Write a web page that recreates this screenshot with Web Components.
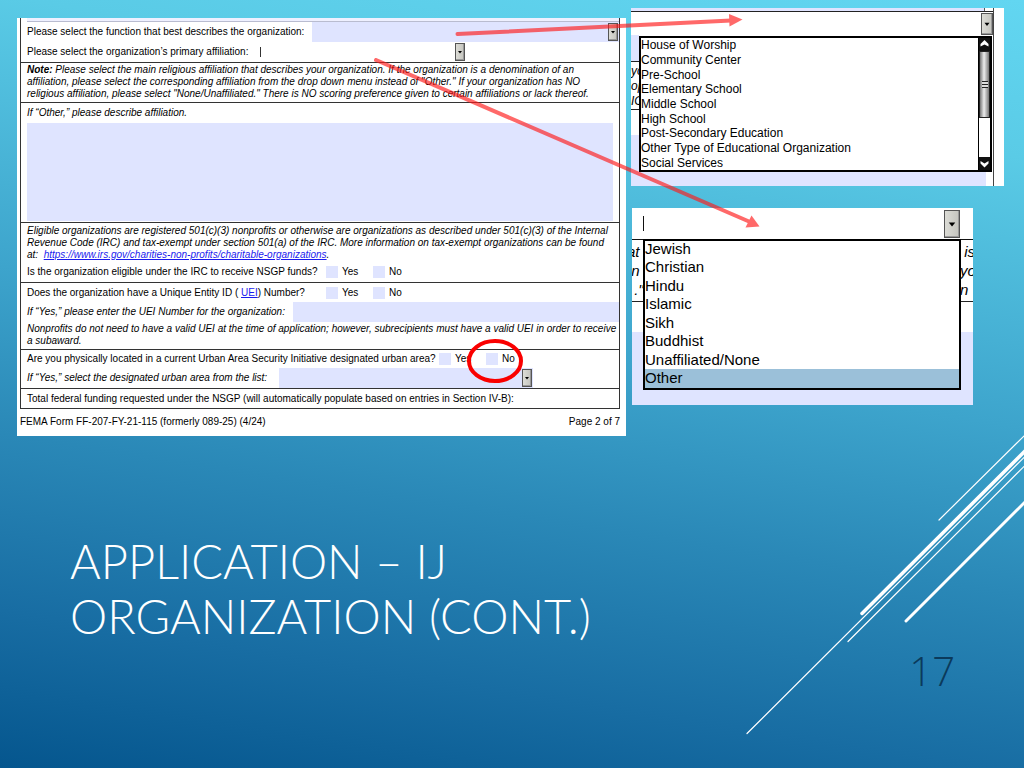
<!DOCTYPE html>
<html lang="en">
<head>
<meta charset="utf-8">
<title>Application – IJ Organization (cont.)</title>
<style>
  body { margin: 0; font-family: "Liberation Sans", Arial, sans-serif; color: #000; }
</style>
</head>
<body>
<training-slide>
  <nsgp-form slot="form"></nsgp-form>
  <function-popup slot="popups"></function-popup>
  <affiliation-popup slot="popups"></affiliation-popup>
  <span slot="title">APPLICATION – IJ<br>ORGANIZATION (CONT.)</span>
  <span slot="number">17</span>
</training-slide>

<template id="t-slide">
  <style>
    :host { display: block; }
    main {
      position: relative; box-sizing: border-box; min-height: 100vh; overflow: hidden;
      display: flex; flex-direction: column;
      background: linear-gradient(189deg, #62d6f1 0%, #5acbe6 17%, #3da4cc 46%, #2a88b7 64%, #186da3 83%, #05568e 100%);
    }
    .captures { display: grid; grid-template-columns: 609fr 373fr; column-gap: 5px; padding: 8px 20px 0 17px; align-items: start; }
    .left { padding-top: 10px; }
    .right { display: flex; flex-direction: column; gap: 22px; }
    h1 {
      margin: 98px 70px 0; color: #fff; text-transform: uppercase;
      font: 300 47px/55px Lato, "Open Sans", sans-serif;
    }
    .number { margin: 0 69px 0 0; text-align: right; color: #0b3a5b; font: 300 40px/54px "Open Sans", "Noto Sans", sans-serif; }
    svg { position: absolute; inset: 0; width: 100%; height: 100%; pointer-events: none; }
  </style>
  <main>
    <div class="captures">
      <div class="left"><slot name="form"></slot></div>
      <div class="right"><slot name="popups"></slot></div>
    </div>
    <h1><slot name="title"></slot></h1>
    <div class="number"><slot name="number"></slot></div>
    <svg viewBox="0 0 1024 768" preserveAspectRatio="none" aria-hidden="true">
      <g stroke="#fff" stroke-linecap="round" fill="none">
        <path d="M939 520L1026 434M747 733.500L1026 455.500M848 641.500L1026 464.500" stroke-width="1.200"/>
        <path d="M862 613.500L1026 450" stroke-width="3.500"/>
        <path d="M906 621L1026 501" stroke-width="3"/>
      </g>
      <g opacity=".65" fill="#ff1a1a">
        <path d="M457.500 34L731 20.600" stroke="#ff1a1a" stroke-width="4" stroke-linecap="round"/>
        <path d="M729 14L742.500 19.500L729.500 26.500Z"/>
      </g>
      <g opacity=".65" fill="#ff1a1a">
        <path d="M376 60L749 221.500" stroke="#ff1a1a" stroke-width="4" stroke-linecap="round"/>
        <path d="M751.500 215.500L759.500 226.500L745.500 227.500Z"/>
      </g>
      <ellipse cx="495" cy="361" rx="26" ry="20" fill="none" stroke="#fa0000" stroke-width="4"/>
    </svg>
  </main>
</template>

<template id="t-arrow">
  <style>
    :host { display: block; box-sizing: border-box; width: 10px; border: 1px solid #555; background: linear-gradient(90deg, #dcdcd6, #c4c4be); box-shadow: inset -1px -1px #999; }
    svg { display: block; width: 100%; height: 100%; }
  </style>
  <svg viewBox="0 0 8 16" aria-hidden="true"><path d="M2 7H6L4 9.500Z" fill="#000"/></svg>
</template>

<template id="t-drop">
  <style>
    :host { display: flex; height: 20px; padding-left: 6px; font-size: 10px; line-height: 19px; }
    label { flex: none; width: var(--label); white-space: nowrap; }
    :host([italic]) label { font-style: italic; }
    .box { flex: 1; display: flex; max-width: var(--field, none); background: #dfe4ff; position: relative; }
    :host([open]) .box { background: #fff; }
    select { flex: 1; min-width: 0; appearance: none; border: 0; margin: 0; padding: 0; background: none; font: inherit; outline: 0; }
    arrow-button { margin: 1px; }
    .caret { display: none; width: 1px; height: 10px; margin: 5px 0 0 1px; background: #333; }
    :host([open]) .caret { display: block; }
  </style>
  <label for="s"><slot></slot></label>
  <div class="box"><span class="caret"></span><select id="s"><option></option></select><arrow-button></arrow-button></div>
</template>

<template id="t-check">
  <style>
    :host { display: inline-flex; align-items: center; width: 47px; }
    input { appearance: none; margin: 0 4px 0 0; width: 12px; height: 12px; background: #dfe4ff; }
    input:checked { background: #5b6ee0; }
  </style>
  <input type="checkbox" id="c"><label for="c"><slot></slot></label>
</template>

<template id="t-form">
  <style>
    :host { display: block; background: #fff; padding: 0 6px 0 3px; font-size: 10px; line-height: 12px; }
    .frame { border: solid #333; border-width: 0 1px; }
    section { border-bottom: 1px solid #333; }
    .strip { margin-left: 6px; height: 3px; background: #eef0ff; border-bottom: 1px solid #b9bcd0; }
    p { margin: 0; padding: 1px 0 0 6px; font-style: italic; white-space: nowrap; }
    .note { padding-bottom: 2px; }
    .lead { padding-top: 2px; }
    a { color: #1a1aee; }
    .row { display: flex; align-items: center; height: 19px; padding-left: 6px; white-space: nowrap; }
    .tall { height: 21px; }
    .short { height: 18px; }
    .q { flex: none; width: 299px; }
    .wide { width: 412px; }
    .it { font-style: italic; }
    .field { height: 20px; }
    .field label { width: 266px; flex: none; }
    input, textarea { box-sizing: border-box; border: 0; margin: 0; padding: 2px; background: #dfe4ff; font: inherit; outline: 0; }
    .field input { flex: 1; min-width: 0; height: 20px; }
    textarea { display: block; resize: none; height: 98px; width: calc(100% - 12px); margin: 0 6px 1px; }
    footer { display: flex; justify-content: space-between; height: 27px; line-height: 26px; }
  </style>
  <div class="frame">
    <div class="strip"></div>
    <section>
      <drop-field style="--label:285px">Please select the function that best describes the organization:</drop-field>
      <drop-field open style="--label:232px;--field:207px">Please select the organization’s primary affiliation:</drop-field>
    </section>
    <section>
      <p class="note"><b>Note:</b> Please select the main religious affiliation that describes your organization. If the organization is a denomination of an<br>affiliation, please select the corresponding affiliation from the drop down menu instead of "Other." If your organization has NO<br>religious affiliation, please select "None/Unaffiliated." There is NO scoring preference given to certain affiliations or lack thereof.</p>
    </section>
    <section>
      <div class="row it field"><label for="aff">If “Other,” please describe affiliation.</label></div>
      <textarea id="aff"></textarea>
    </section>
    <section>
      <p class="lead">Eligible organizations are registered 501(c)(3) nonprofits or otherwise are organizations as described under 501(c)(3) of the Internal<br>Revenue Code (IRC) and tax-exempt under section 501(a) of the IRC. More information on tax-exempt organizations can be found<br>at:&nbsp; <a href="#irs">https://www.irs.gov/charities-non-profits/charitable-organizations</a>.</p>
      <div class="row tall"><span class="q">Is the organization eligible under the IRC to receive NSGP funds?</span><check-option>Yes</check-option><check-option>No</check-option></div>
    </section>
    <section>
      <div class="row"><span class="q">Does the organization have a Unique Entity ID ( <a href="#uei">UEI</a>) Number?</span><check-option>Yes</check-option><check-option>No</check-option></div>
      <div class="row it field"><label for="uei">If “Yes,” please enter the UEI Number for the organization:</label><input id="uei" type="text"></div>
      <p class="note">Nonprofits do not need to have a valid UEI at the time of application; however, subrecipients must have a valid UEI in order to receive<br>a subaward.</p>
    </section>
    <section>
      <div class="row short"><span class="q wide">Are you physically located in a current Urban Area Security Initiative designated urban area?</span><check-option>Yes</check-option><check-option>No</check-option></div>
      <drop-field italic style="--label:252px;--field:254px">If “Yes,” select the designated urban area from the list:</drop-field>
    </section>
    <section><div class="row">Total federal funding requested under the NSGP (will automatically populate based on entries in Section IV-B):</div></section>
  </div>
  <footer><span>FEMA Form FF-207-FY-21-115 (formerly 089-25) (4/24)</span><span>Page 2 of 7</span></footer>
</template>

<template id="t-function">
  <style>
    :host { display: block; position: relative; height: 178px; background: #fff; overflow: hidden; font-size: 12px; }
    .sheet { box-sizing: border-box; height: 100%; margin-right: 10px; border-right: 1px solid #444; }
    .top { height: 3px; margin-right: 8px; background: #dfe4ff; border-right: 1px solid #555; }
    .entry { display: flex; justify-content: flex-end; height: 24px; box-sizing: border-box; border-top: 1px solid #222; }
    arrow-button { width: 12px; height: 22px; margin-top: 1px; }
    .blue { height: 26px; width: 8px; background: #dfe4ff; }
    .lines { height: 49px; box-sizing: border-box; border: solid #222; border-width: 1px 0; padding-top: 2px; line-height: 15px; font-style: italic; width: 14px; overflow: hidden; }
    .area { margin: 25px 7px 0 0; height: 52px; background: #dfe4ff; }
    .menu { position: absolute; left: 8px; right: 12px; top: 28px; display: flex; border: 2px solid #000; background: #fff; }
    select { flex: 1; min-width: 0; height: 132px; appearance: none; border: 0; margin: 0; padding: 0; background: #fff; color: #000; font: inherit; overflow: hidden; outline: 0; border-radius: 0; }
    option { box-sizing: border-box; height: 15px; min-height: 0; padding: 0; line-height: 12px; color: #000; }
    option:nth-child(3n) { height: 14px; }
    .bar { width: 11px; display: flex; flex-direction: column; border-left: 1px solid #000; }
    .bar svg { display: block; flex: none; }
    .thumb { box-sizing: border-box; height: 67px; border: solid #222; border-width: 1px; background: linear-gradient(90deg, #777, #eee 45%, #ccc 60%, #777); display: flex; align-items: center; justify-content: center; }
    .thumb i { width: 6px; height: 5px; border: solid #222; border-width: 1px 0; background: linear-gradient(#ddd 40%, #222 40% 60%, #ddd 60%); }
    .gap { flex: 1; background: #fff; }
  </style>
  <div class="sheet">
    <div class="top"></div>
    <div class="entry"><arrow-button></arrow-button></div>
    <div class="blue"></div>
    <div class="lines">yo<br>op<br>IC</div>
    <div class="area"></div>
  </div>
  <div class="menu">
    <select size="9" aria-label="Organization function">
      <option>House of Worship</option><option>Community Center</option><option>Pre-School</option><option>Elementary School</option><option>Middle School</option><option>High School</option><option>Post-Secondary Education</option><option>Other Type of Educational Organization</option><option>Social Services</option>
    </select>
    <div class="bar" aria-hidden="true">
      <svg width="11" height="13"><path d="M0 0H11V13H0Z" fill="#111"/><path d="M1.500 8.500V6L5.500 2L9.500 6V8.500L5.500 6.500Z" fill="#fff"/></svg>
      <div class="thumb"><i></i></div>
      <div class="gap"></div>
      <svg width="11" height="13"><path d="M0 0H11V13H0Z" fill="#111"/><path d="M1.500 4V6.500L5.500 10.500L9.500 6.500V4L5.500 6.500Z" fill="#fff"/></svg>
    </div>
  </div>
</template>

<template id="t-affiliation">
  <style>
    :host { display: block; position: relative; height: 197px; margin: 0 31px 0 1px; background: #fff; overflow: hidden; font-size: 15px; }
    .entry { display: flex; justify-content: space-between; box-sizing: border-box; height: 32px; padding: 2px 13px 1px 11px; border-bottom: 1px solid #111; }
    .caret { width: 1px; height: 15px; margin-top: 6px; background: #111; }
    arrow-button { width: 16px; height: 28px; }
    .lines { display: flex; justify-content: space-between; box-sizing: border-box; height: 62px; padding-top: 2px; border-bottom: 1px solid #222; font-style: italic; line-height: 19px; white-space: nowrap; }
    .l, .r { overflow: hidden; }
    .l { display: flex; flex-direction: column; align-items: flex-end; width: 20px; }
    .r { width: 13px; }
    .area { margin-top: 30px; height: 73px; background: #dfe4ff; }
    .menu { position: absolute; left: 11px; right: 12px; top: 31px; border: 2px solid #000; background: #fff; }
    select { display: block; width: 100%; height: 147px; appearance: none; border: 0; margin: 0; padding: 0; background: #fff; color: #000; font: inherit; overflow: hidden; outline: 0; border-radius: 0; }
    option { box-sizing: border-box; height: 18px; min-height: 0; padding: 0; line-height: 18px; color: #000; }
    option:nth-child(even) { height: 19px; }
    option:checked { background: linear-gradient(#9bc0d9, #9bc0d9); color: #000; }
  </style>
  <div class="entry"><span class="caret"></span><arrow-button></arrow-button></div>
  <div class="lines"><div class="l"><span>at&nbsp;&nbsp;&nbsp;</span><span>n f&nbsp;</span><span>."&nbsp;&nbsp;</span></div><div class="r">&nbsp;is<br>yo<br>n</div></div>
  <div class="area"></div>
  <div class="menu">
    <select size="8" aria-label="Primary affiliation">
      <option>Jewish</option><option>Christian</option><option>Hindu</option><option>Islamic</option><option>Sikh</option><option>Buddhist</option><option>Unaffiliated/None</option><option selected>Other</option>
    </select>
  </div>
</template>

<script>
  function define(name, templateId) {
    customElements.define(name, class extends HTMLElement {
      constructor() {
        super();
        this.attachShadow({ mode: 'open' })
          .append(document.getElementById(templateId).content.cloneNode(true));
      }
    });
  }
  define('arrow-button', 't-arrow');
  define('drop-field', 't-drop');
  define('check-option', 't-check');
  define('nsgp-form', 't-form');
  define('function-popup', 't-function');
  define('affiliation-popup', 't-affiliation');
  define('training-slide', 't-slide');
</script>
</body>
</html>
